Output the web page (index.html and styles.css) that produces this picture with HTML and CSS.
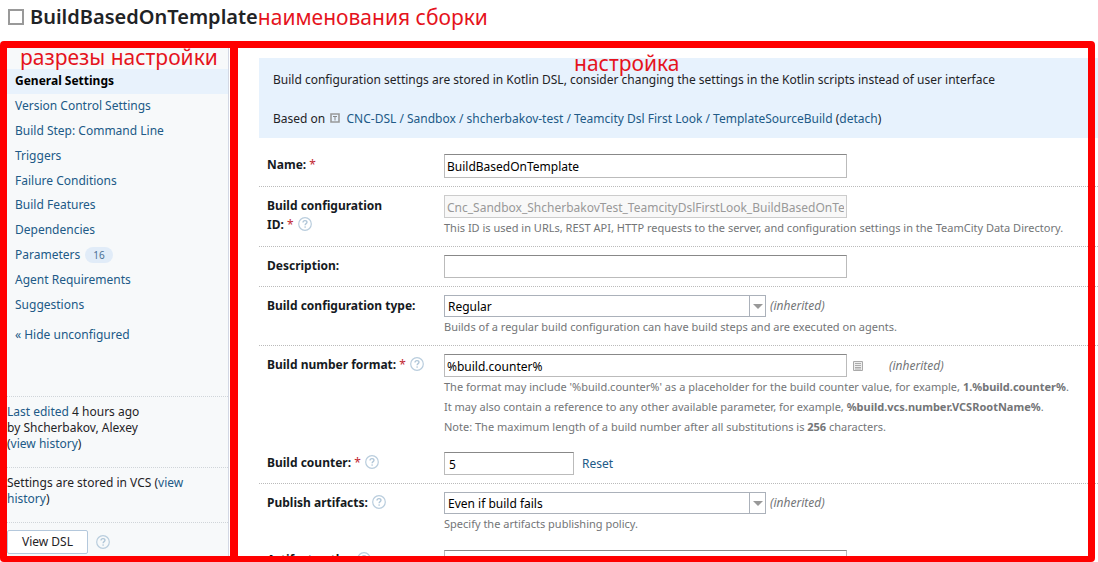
FILE: index.html
```html
<!DOCTYPE html>
<html lang="en">
<head>
<meta charset="utf-8">
<meta name="viewport" content="width=device-width, initial-scale=1">
<title>BuildBasedOnTemplate</title>
<link rel="stylesheet" href="styles.css">
</head>
<body>
<svg class="sprite" aria-hidden="true">
  <symbol id="help" viewBox="0 0 14 14"><circle cx="7" cy="7" r="6.3" fill="none" stroke="#b9cddd" stroke-width="1.2"/><path d="M5 5.5C5 4.2 5.8 3.6 7 3.6s2 .7 2 1.7c0 1.3-1.9 1.4-1.9 2.9" fill="none" stroke="#b0c6d8" stroke-width="1.3"/><circle cx="7.1" cy="10.1" r=".8" fill="#b0c6d8"/></symbol>
  <symbol id="arrow" viewBox="0 0 17 22"><path d="M.5 0v22" stroke="#abb1ba"/><path d="M4 9h10l-5 5z" fill="#999"/></symbol>
</svg>
<header class="title-bar">
  <input type="checkbox" class="title-check" aria-label="Select configuration">
  <h1 class="title">BuildBasedOnTemplate</h1>
  <span class="mark">наименования сборки</span>
</header>
<div class="workspace">
  <aside class="sidebar">
    <nav>
      <ul class="menu">
        <li class="menu-item current">General Settings</li>
        <li class="menu-item"><a href="#vcs">Version Control Settings</a></li>
        <li class="menu-item"><a href="#steps">Build Step: Command Line</a></li>
        <li class="menu-item"><a href="#triggers">Triggers</a></li>
        <li class="menu-item"><a href="#failure">Failure Conditions</a></li>
        <li class="menu-item"><a href="#features">Build Features</a></li>
        <li class="menu-item"><a href="#deps">Dependencies</a></li>
        <li class="menu-item"><a href="#params">Parameters</a><span class="count">16</span></li>
        <li class="menu-item"><a href="#agents">Agent Requirements</a></li>
        <li class="menu-item"><a href="#suggestions">Suggestions</a></li>
      </ul>
      <a class="hide-link" href="#hide">« Hide unconfigured</a>
    </nav>
    <div class="info edited"><a href="#edited">Last edited</a> 4 hours ago<br>by Shcherbakov, Alexey<br>(<a href="#history">view history</a>)</div>
    <div class="info stored">Settings are stored in VCS (<a href="#vcs-history">view history</a>)</div>
    <div class="info dsl"><button type="button" class="button">View DSL</button><svg class="help"><use href="#help"/></svg></div>
  </aside>
  <main class="content">
    <div class="banner">
      <p>Build configuration settings are stored in Kotlin DSL, consider changing the settings in the Kotlin scripts instead of user interface</p>
      <p>Based on <svg class="template" viewBox="0 0 10 10"><path d="M1 1h8v8H1z" fill="none" stroke="#999" stroke-width="1.6"/><path d="M3 3.5h4M5 3.5V7.5" stroke="#888" fill="none"/></svg> <a href="#template">CNC-DSL / Sandbox / shcherbakov-test / Teamcity Dsl First Look / TemplateSourceBuild</a> (<a href="#detach">detach</a>)</p>
    </div>
    <form>
      <div class="row first">
        <div class="label"><label for="name">Name:</label> <span class="req">*</span></div>
        <div class="field"><div class="line"><input id="name" class="text" value="BuildBasedOnTemplate"></div></div>
      </div>
      <div class="row">
        <div class="label"><label for="ext-id">Build configuration<br>ID:</label> <span class="req">*</span> <svg class="help"><use href="#help"/></svg></div>
        <div class="field"><div class="line"><input id="ext-id" class="text" disabled value="Cnc_Sandbox_ShcherbakovTest_TeamcityDslFirstLook_BuildBasedOnTemplate"></div>
          <p class="note">This ID is used in URLs, REST API, HTTP requests to the server, and configuration settings in the TeamCity Data Directory.</p></div>
      </div>
      <div class="row">
        <div class="label"><label for="desc">Description:</label></div>
        <div class="field"><div class="line"><input id="desc" class="text"></div></div>
      </div>
      <div class="row">
        <div class="label"><label for="type">Build configuration type:</label></div>
        <div class="field"><div class="line"><span class="picker"><select id="type" class="select"><option>Regular</option></select><svg class="arrow"><use href="#arrow"/></svg></span><em class="inherited">(inherited)</em></div>
          <p class="note">Builds of a regular build configuration can have build steps and are executed on agents.</p></div>
      </div>
      <div class="row plain">
        <div class="label"><label for="format">Build number format:</label> <span class="req">*</span> <svg class="help"><use href="#help"/></svg></div>
        <div class="field"><div class="line"><input id="format" class="text" value="%build.counter%"><svg class="list" viewBox="0 0 10 10"><path d="M.5.5h9v9h-9z" fill="#eee" stroke="#aaa"/><path d="M2 2.5h6M2 4.5h6M2 6.5h6M2 8h6" stroke="#999" stroke-width=".8"/></svg><em class="inherited far">(inherited)</em></div>
          <p class="note">The format may include '%build.counter%' as a placeholder for the build counter value, for example, <b>1.%build.counter%</b>.<br>It may also contain a reference to any other available parameter, for example, <b>%build.vcs.number.VCSRootName%</b>.<br>Note: The maximum length of a build number after all substitutions is <b>256</b> characters.</p></div>
      </div>
      <div class="row">
        <div class="label"><label for="counter">Build counter:</label> <span class="req">*</span> <svg class="help"><use href="#help"/></svg></div>
        <div class="field"><div class="line"><input id="counter" class="text short" value="5"><a class="reset" href="#reset">Reset</a></div></div>
      </div>
      <div class="row open">
        <div class="label"><label for="publish">Publish artifacts:</label> <svg class="help"><use href="#help"/></svg></div>
        <div class="field"><div class="line"><span class="picker"><select id="publish" class="select"><option>Even if build fails</option></select><svg class="arrow"><use href="#arrow"/></svg></span><em class="inherited">(inherited)</em></div>
          <p class="note">Specify the artifacts publishing policy.</p></div>
      </div>
      <div class="row last">
        <div class="label"><label for="paths">Artifact paths:</label> <svg class="help"><use href="#help"/></svg></div>
        <div class="field"><div class="line"><input id="paths" class="text"><svg class="tree" viewBox="0 0 12 12"><path d="M1 1.5h4M1 3.5h4M3 5v5h3" stroke="#999" fill="none"/><path d="M6 1h2l1 1h3v4H6zM6 8h6v4H6z" fill="#5b8fb5"/></svg><em class="inherited">(inherited)</em></div></div>
      </div>
    </form>
  </main>
  <div class="frames" aria-hidden="true"><div class="frame-side"></div></div>
  <span class="mark mark-side">разрезы настройки</span>
  <span class="mark mark-main">настройка</span>
</div>
</body>
</html>
```
FILE: styles.css
```css
* { box-sizing: border-box; }
body {
  margin: 0;
  height: 100vh;
  display: flex;
  flex-direction: column;
  overflow: hidden;
  background: #fff;
  color: #1f2326;
  font: 12px/16px "Noto Sans", "Open Sans", sans-serif;
}
a { color: #215a87; text-decoration: none; }
p { margin: 0; }
.sprite { position: absolute; width: 0; height: 0; }
.help { width: 14px; height: 14px; vertical-align: -2px; margin-left: 1px; }

.title-bar { display: flex; align-items: center; height: 41px; padding: 0 8px 8px; flex: none; }
.title-check {
  appearance: none;
  width: 16px;
  height: 16px;
  margin: 0 6px 0 0;
  border: 2px solid #999;
  background: #fff;
}
.title { margin: 0; font-size: 20px; font-weight: 600; line-height: 24px; }
.mark { color: #e5131d; font-size: 21px; line-height: 24px; white-space: nowrap; }

.workspace { position: relative; flex: 1; min-height: 0; display: flex; overflow: hidden; }
.sidebar {
  flex: none;
  width: 229px;
  padding: 28px 0 0 7px;
  border-right: 1px solid #d3d8e4;
  background: #f7f9fa;
}
.menu {
  display: flex;
  flex-direction: column;
  height: 248px;
  margin: 0;
  padding: 0;
  list-style: none;
}
.menu-item { flex: 1; display: flex; align-items: center; padding-left: 8px; }
.current { background: #e8f2fc; color: #000; font-weight: 700; }
.count {
  margin-left: 5px;
  padding: 0 8px;
  border-radius: 8px;
  background: #e1ecf8;
  color: #4a6f94;
  font-size: 10px;
}
.hide-link { display: block; padding: 10px 8px 0; }
.info { border-top: 1px dotted #d0d5d9; }
.edited { margin-top: 53px; height: 71px; padding-top: 7px; }
.stored { height: 55px; padding: 7px 32px 0 0; }
.dsl { display: flex; align-items: center; gap: 7px; padding-top: 7px; }
.button {
  height: 24px;
  width: 81px;
  padding: 0;
  border: 1px solid #b4c8dc;
  border-radius: 2px;
  background: #fff;
  color: #1f2326;
  font: inherit;
}

.content { flex: 1; min-width: 0; padding: 17px 0 0 30px; }
.banner {
  display: grid;
  align-content: start;
  gap: 23px;
  height: 80px;
  padding: 14px;
  background: #e7f2fd;
}
.banner p { white-space: nowrap; }
.template { width: 10px; height: 10px; margin: 0 3px 0 2px; }
.row {
  display: grid;
  grid-template-columns: 177px 1fr;
  padding: 8px 0 8px 8px;
  border-bottom: 1px dotted #bbb;
}
.row.first { padding-top: 16px; }
.row.plain { padding-bottom: 7px; border: 0; }
.row.open { border: 0; }
.label { color: #151a1e; font-weight: 700; line-height: 19px; padding-top: 1px; }
.last .label { padding-top: 0; }
.req { color: #c22731; font-weight: 400; }
.line { display: flex; align-items: center; }
.text {
  width: 403px;
  height: 23px;
  padding: 1px 2px 0;
  border: 1px solid #bbb;
  border-top-color: #888;
  background: #fff;
  color: #000;
  font: inherit;
}
.first .text { height: 24px; }
.text:disabled { border-color: #ccc; background: #f8f8f8; color: #999; }
.short { width: 130px; padding-left: 4px; }
.note { color: #737577; font-size: 11px; line-height: 20px; white-space: nowrap; }
.picker { position: relative; display: block; width: 322px; height: 22px; }
.select {
  appearance: none;
  width: 100%;
  height: 100%;
  padding: 1px 20px 0 3px;
  border: 1px solid #abb1ba;
  border-radius: 0;
  background: #fff;
  color: #000;
  font: inherit;
}
.arrow { position: absolute; top: 0; right: 0; width: 17px; height: 22px; pointer-events: none; }
.inherited { margin-left: 4px; color: #737577; }
.list { width: 10px; height: 10px; margin-left: 6px; }
.far { margin-left: 26px; }
.tree { width: 12px; height: 12px; margin: 0 4px 0 24px; }
.reset { margin-left: 8px; }

/* Annotation layer above the page */
.frames {
  position: absolute;
  inset: 0 3px 0 0;
  border: 7px solid #f00;
  border-bottom-width: 6px;
  border-radius: 4px;
  pointer-events: none;
}
.frame-side { width: 231px; height: 100%; border-right: 8px solid #f00; }
.mark-side { position: absolute; top: 4px; left: 20px; }
.mark-main { position: absolute; top: 10px; left: 574px; }
```
